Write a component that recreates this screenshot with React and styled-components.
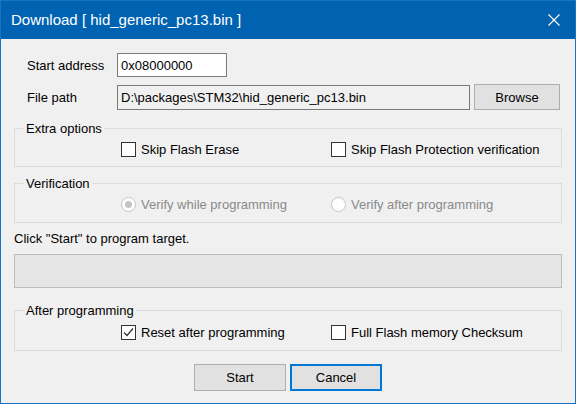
import styled, { createGlobalStyle } from 'styled-components'

const GlobalStyle = createGlobalStyle`
  body {
    margin: 0;
    background: #ffffff;
  }
  * {
    box-sizing: border-box;
  }
`

const Window = styled.div`
  width: 576px;
  height: 404px;
  display: flex;
  flex-direction: column;
  border: 1px solid #1a73c4;
  background: #f0f0f0;
  font-family: "Liberation Sans", Arial, sans-serif;
  font-size: 13px;
  color: #000;
`

const TitleBar = styled.div`
  height: 38px;
  flex-shrink: 0;
  display: flex;
  align-items: center;
  justify-content: space-between;
  padding: 0 15px 0 10px;
  background: #0063b1;
  color: #fff;
`

const Title = styled.div`
  font-size: 15px;
  padding-bottom: 1px;
`

const Body = styled.div`
  display: flex;
  flex-direction: column;
  padding: 14px 13px 0;
`

const FormRow = styled.div`
  display: flex;
  align-items: center;
  height: ${p => p.h}px;
  padding-left: 13px;
  margin-bottom: ${p => p.mb || 0}px;
`

const Label = styled.div`
  width: 90px;
`

const TextBox = styled.div`
  width: ${p => p.w}px;
  height: ${p => p.h || 24}px;
  display: flex;
  align-items: center;
  padding-left: 3px;
  border: 1px solid #7a7a7a;
  background: ${p => (p.readonly ? '#f0f0f0' : '#fff')};
  white-space: nowrap;
  overflow: hidden;
`

const Button = styled.button`
  width: ${p => p.w}px;
  height: ${p => p.h}px;
  margin-left: ${p => p.ml || 0}px;
  font-family: inherit;
  font-size: 13px;
  color: #000;
  background: #e1e1e1;
  border: 1px solid ${p => (p.primary ? '#0078d7' : '#adadad')};
  box-shadow: ${p => (p.primary ? 'inset 0 0 0 1px #0078d7' : 'none')};
  padding: 0;
`

const Group = styled.fieldset`
  margin: ${p => p.mt}px 0 0;
  padding: 0;
  min-inline-size: 0;
  border: 1px solid #dcdcdc;
`

const Legend = styled.legend`
  margin-left: 9px;
  padding: 0 2px;
  line-height: 15px;
`

const OptionGrid = styled.div`
  display: grid;
  grid-template-columns: 210px auto;
  padding: ${p => p.pt}px 0 ${p => p.pb}px 106px;
`

const Option = styled.label`
  display: flex;
  align-items: center;
  gap: 5px;
  height: 15px;
  color: ${p => (p.disabled ? '#8a8a8a' : '#000')};
`

const CheckBox = styled.span`
  width: 15px;
  height: 15px;
  border: 1px solid #333;
  background: #fff;
  display: flex;
  align-items: center;
  justify-content: center;
`

const Radio = styled.span`
  width: 15px;
  height: 15px;
  border-radius: 50%;
  border: 1px solid #c4c4c4;
  background: #fff;
  display: flex;
  align-items: center;
  justify-content: center;
`

const RadioDot = styled.span`
  width: 7px;
  height: 7px;
  border-radius: 50%;
  background: #c4c4c4;
`

const Status = styled.div`
  margin-top: 8px;
  line-height: 15px;
`

const Progress = styled.div`
  margin-top: 8px;
  height: 34px;
  border: 1px solid #bcbcbc;
  background: #e6e6e6;
`

const Buttons = styled.div`
  display: flex;
  justify-content: center;
  gap: 4px;
  margin-top: 13px;
`

const Check = ({ checked, children }) => (
  <Option>
    <CheckBox>
      {checked && (
        <svg width="11" height="11" viewBox="0 0 11 11">
          <path d="M1 5.5 L4 8.5 L10 1.5" fill="none" stroke="#333" strokeWidth="1.3" />
        </svg>
      )}
    </CheckBox>
    {children}
  </Option>
)

const RadioOpt = ({ selected, children }) => (
  <Option disabled>
    <Radio>{selected && <RadioDot />}</Radio>
    {children}
  </Option>
)

const App = () => {
  return (
    <Window>
      <GlobalStyle />
      <TitleBar>
        <Title>Download [ hid_generic_pc13.bin ]</Title>
        <svg width="12" height="12" viewBox="0 0 12 12">
          <path d="M0.5 0.5 L11.5 11.5 M11.5 0.5 L0.5 11.5" stroke="#fff" strokeWidth="1.1" />
        </svg>
      </TitleBar>
      <Body>
        <FormRow h={24} mb={7}>
          <Label>Start address</Label>
          <TextBox w={110}>0x08000000</TextBox>
        </FormRow>
        <FormRow h={26}>
          <Label>File path</Label>
          <TextBox w={353} h={25} readonly>D:\packages\STM32\hid_generic_pc13.bin</TextBox>
          <Button w={86} h={26} ml={4}>Browse</Button>
        </FormRow>

        <Group mt={11}>
          <Legend>Extra options</Legend>
          <OptionGrid pt={6} pb={9}>
            <Check>Skip Flash Erase</Check>
            <Check>Skip Flash Protection verification</Check>
          </OptionGrid>
        </Group>

        <Group mt={9}>
          <Legend>Verification</Legend>
          <OptionGrid pt={6} pb={10}>
            <RadioOpt selected>Verify while programming</RadioOpt>
            <RadioOpt>Verify after programming</RadioOpt>
          </OptionGrid>
        </Group>

        <Status>Click "Start" to program target.</Status>
        <Progress />

        <Group mt={15}>
          <Legend>After programming</Legend>
          <OptionGrid pt={7} pb={10}>
            <Check checked>Reset after programming</Check>
            <Check>Full Flash memory Checksum</Check>
          </OptionGrid>
        </Group>

        <Buttons>
          <Button w={92} h={27}>Start</Button>
          <Button w={92} h={27} primary>Cancel</Button>
        </Buttons>
      </Body>
    </Window>
  )
}

export default App
